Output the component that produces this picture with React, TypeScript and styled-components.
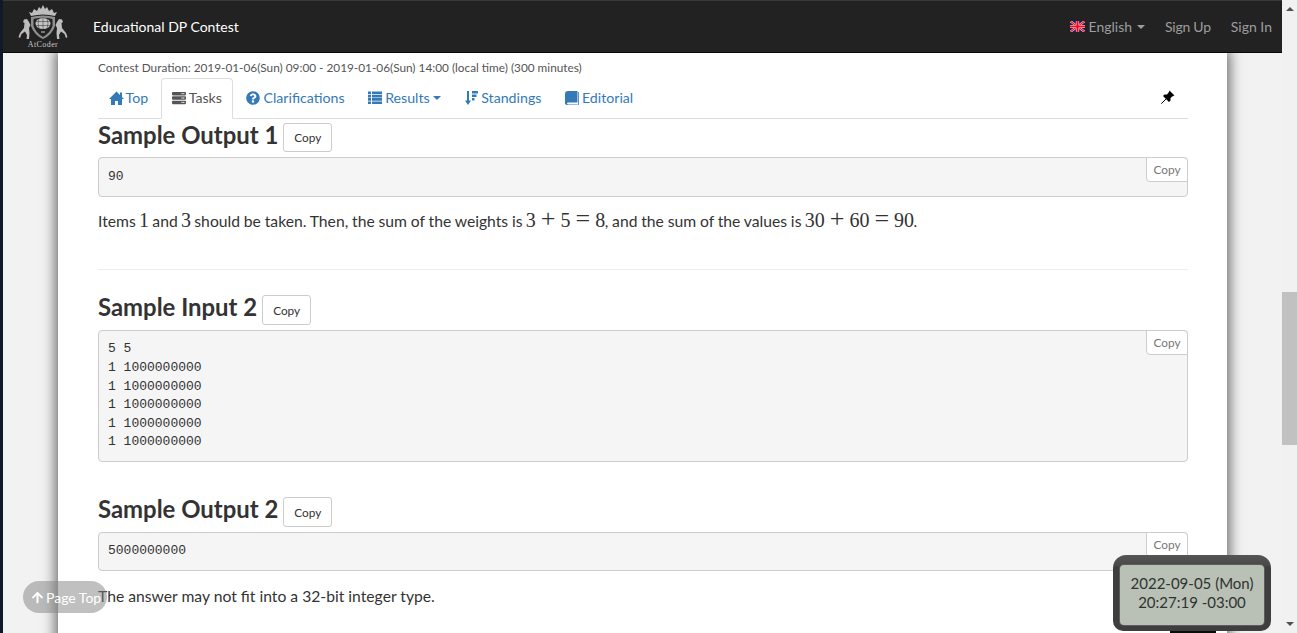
import React from "react";
import styled, { createGlobalStyle } from "styled-components";
import { FaServer, FaQuestionCircle, FaArrowUp } from "react-icons/fa";

const GlobalStyle = createGlobalStyle`
  html, body {
    margin: 0;
    height: 100%;
    overflow: hidden;
  }
  body {
    font-family: Lato, "Liberation Sans", sans-serif;
    font-size: 15.7px;
    color: #333;
  }
`;

const Page = styled.div`
  position: relative;
  display: flex;
  width: 1297px;
  height: 633px;
  overflow: hidden;
  background: #f2f2f2;
`;

const WindowEdge = styled.div`
  width: 3px;
  background: #0f1a26;
`;

const Main = styled.div`
  flex: 1;
  display: flex;
  flex-direction: column;
  min-width: 0;
`;

const Navbar = styled.header`
  height: 51px;
  flex: none;
  display: flex;
  align-items: center;
  background: #222;
  border-top: 1px solid #3a3a3a;
  border-bottom: 1px solid #080808;
  box-sizing: content-box;
  z-index: 2;
`;

const Brand = styled.div`
  width: 80px;
  margin-right: 10px;
  flex: none;
  display: flex;
  flex-direction: column;
  align-items: center;
`;

const BrandName = styled.span`
  font-family: "Liberation Serif", serif;
  font-size: 8px;
  line-height: 8px;
  letter-spacing: 0.4px;
  color: #c8c8c8;
`;

const ContestName = styled.a`
  font-size: 14px;
  color: #fff;
`;

const NavRight = styled.nav`
  margin-left: auto;
  display: flex;
  align-items: center;
  gap: 20px;
  padding-right: 10px;
  font-size: 14px;
  color: #9d9d9d;
`;

const NavItem = styled.a<{ $tight?: boolean }>`
  display: flex;
  align-items: center;
  color: #9d9d9d;
  letter-spacing: ${(p) => (p.$tight ? "-0.25px" : "0")};
`;

const Flag = styled.svg`
  width: 15px;
  height: 11px;
  margin-right: 4px;
`;

const Caret = styled.span<{ $color?: string; $gap?: number }>`
  display: inline-block;
  width: 0;
  height: 0;
  margin-left: ${(p) => p.$gap ?? 5}px;
  border-top: 4px solid ${(p) => p.$color ?? "#9d9d9d"};
  border-left: 4px solid transparent;
  border-right: 4px solid transparent;
`;

const Body = styled.div`
  flex: 1;
  min-height: 0;
  display: flex;
  padding-left: 55px;
  overflow: hidden;
`;

const Panel = styled.main`
  width: 1169px;
  height: 620px;
  flex: none;
  box-sizing: border-box;
  padding: 8px 39px 0 40px;
  background: #fff;
  box-shadow: 0 0 12px 3px rgba(0, 0, 0, 0.55);
`;

const Duration = styled.small`
  display: block;
  font-size: 11.8px;
  line-height: 14px;
  color: #555;
`;

const Tabs = styled.ul`
  display: flex;
  align-items: flex-start;
  list-style: none;
  margin: 3px 0 0;
  padding: 0;
  height: 41px;
  box-sizing: border-box;
  border-bottom: 1px solid #ddd;
`;

const Tab = styled.li<{ $active?: boolean }>`
  display: flex;
  align-items: center;
  gap: 3px;
  height: ${(p) => (p.$active ? 41 : 40)}px;
  box-sizing: border-box;
  padding: 0 10px 2px;
  margin-right: ${(p) => (p.$active ? 2.5 : 1.5)}px;
  font-size: 14.2px;
  color: ${(p) => (p.$active ? "#555" : "#337ab7")};
  background: ${(p) => (p.$active ? "#fff" : "transparent")};
  border: 1px solid ${(p) => (p.$active ? "#ddd" : "transparent")};
  border-bottom: ${(p) => (p.$active ? "1px solid #fff" : "none")};
  border-radius: 4px 4px 0 0;

  svg {
    font-size: 14px;
    flex: none;
  }
`;

const PinTab = styled.li`
  margin-left: auto;
  align-self: center;
  padding: 0 13px 2px 0;
  color: #000;
  line-height: 0;
`;

const HomeSvg = styled.svg`
  margin-right: -1.5px;
`;

const HeadingRow = styled.div<{ $top: number }>`
  display: flex;
  align-items: flex-start;
  gap: 5px;
  height: 29.5px;
  margin-top: ${(p) => p.$top}px;
`;

const Heading = styled.h3`
  margin: 0;
  font-size: 23.9px;
  font-weight: 700;
  line-height: 24px;
  color: #333;
`;

const CopyButton = styled.button`
  height: 29.5px;
  padding: 0 10px;
  font-family: inherit;
  font-size: 11.8px;
  color: #333;
  background: #fff;
  border: 1px solid #ccc;
  border-radius: 3px;
`;

const PreBox = styled.div`
  position: relative;
  margin-top: 5px;
  box-sizing: border-box;
  padding: 9.5px 9px;
  background: #f5f5f5;
  border: 1px solid #ccc;
  border-radius: 4px;
`;

const Pre = styled.pre`
  margin: 0;
  font-family: "Liberation Mono", monospace;
  font-size: 13px;
  line-height: 18.57px;
  color: #333;
`;

const CornerCopy = styled.span`
  position: absolute;
  top: -1px;
  right: -1px;
  width: 42px;
  height: 25px;
  box-sizing: border-box;
  display: flex;
  align-items: center;
  justify-content: center;
  font-size: 11.8px;
  color: #777;
  background: #fff;
  border: 1px solid #ccc;
  border-radius: 0 4px 0 4px;
`;

const Paragraph = styled.p<{ $tight?: boolean }>`
  margin: 13.4px 0 0;
  font-size: 15.7px;
  line-height: 23px;
  color: #333;
  word-spacing: ${(p) => (p.$tight ? "-0.2px" : "0")};
`;

const MathText = styled.span`
  font-family: "Liberation Serif", serif;
  font-size: 20px;
  line-height: 0;
  margin: 0 -0.5px;
`;

const MathOp = styled.span`
  font-size: 26px;
  font-weight: 400;
  line-height: 0;
  margin: 0 5px;
`;

const Rule = styled.hr`
  margin: 36px 0 0;
  border: 0;
  border-top: 1px solid #eee;
`;

const Scrollbar = styled.div`
  position: relative;
  width: 15px;
  flex: none;
  background: #f1f1f1;
  display: flex;
  flex-direction: column;
  align-items: center;
  justify-content: space-between;
  padding: 7px 0;
  box-sizing: border-box;
`;

const ScrollThumb = styled.div`
  position: absolute;
  top: 292px;
  left: 0;
  width: 15px;
  height: 153px;
  background: #c1c1c1;
`;

const ScrollArrow = styled.span<{ $up?: boolean }>`
  width: 0;
  height: 0;
  border-left: 4px solid transparent;
  border-right: 4px solid transparent;
  ${(p) => (p.$up ? "border-bottom: 4px solid #505050;" : "border-top: 4px solid #505050;")}
`;

const PageTop = styled.a`
  position: absolute;
  left: 23px;
  top: 581px;
  width: 84px;
  height: 32px;
  box-sizing: border-box;
  padding-left: 8px;
  display: flex;
  align-items: center;
  gap: 2px;
  font-size: 14px;
  white-space: nowrap;
  color: #fff;
  background: rgba(130, 130, 130, 0.5);
  border-radius: 16px;
  z-index: 3;

  svg {
    font-size: 13px;
  }
`;

const ClockStand = styled.div`
  position: absolute;
  left: 1170px;
  top: 628px;
  width: 46px;
  height: 5px;
  background: #0a0a0a;
  z-index: 3;
`;

const Clock = styled.div`
  position: absolute;
  left: 1113px;
  top: 555px;
  width: 158px;
  height: 76px;
  box-sizing: border-box;
  padding: 10px 7px 6px 7px;
  background: linear-gradient(#555 0, #4a4a4a 10px, #3e3e3e 12px, #3e3e3e 100%);
  border-radius: 13px 13px 10px 10px;
  z-index: 4;
`;

const ClockFace = styled.div`
  height: 100%;
  box-sizing: border-box;
  padding-top: 8.5px;
  text-align: center;
  font-size: 15px;
  line-height: 19.5px;
  color: #2f332f;
  background: #b9c0b6;
  border-radius: 4px;
  box-shadow: 0 0 0 1px #5c5c5c;
`;

function CrestLogo() {
  return (
    <svg width="52" height="37" viewBox="0 0 52 37">
      <g fill="#bdbdbd">
        {/* crown */}
        <path d="M14 12 L12 8 L15 9 L17 5 L20 7 L22 3 L24 5 L26 1 L28 5 L30 3 L32 7 L35 5 L37 9 L40 8 L38 12 Q26 9 14 12Z" />
        {/* shield */}
        <path d="M14 13 Q26 10 38 13 L38 22 Q35 31 26 35 Q17 31 14 22Z" fill="#8f8f8f" />
        <path d="M16.5 15 Q26 12.5 35.5 15 L35.5 22 Q33 29 26 33 Q19 29 16.5 22Z" fill="#222" />
        <ellipse cx="26" cy="19.5" rx="7.5" ry="5.5" fill="#c4c4c4" />
        <path d="M24 27 h4 v2 h-4z" fill="#777" />
        {/* rearing horses, one each side of the shield */}
        <path d="M12 18 L10 15 L7 15.5 L6 18 L7.5 19 L7 24 L3 29 L1.5 33 L3 34 L4.5 30 L8 27.5 L10 31 L9.5 35 L12 35 L12.5 29 L12 24 L13.5 21Z" />
        <path d="M40 18 L42 15 L45 15.5 L46 18 L44.5 19 L45 24 L49 29 L50.5 33 L49 34 L47.5 30 L44 27.5 L42 31 L42.5 35 L40 35 L39.5 29 L40 24 L38.5 21Z" />
      </g>
      <g stroke="#444" strokeWidth="0.6" fill="none">
        <path d="M18.5 17.5 H33.5 M18.5 21.5 H33.5 M26 14 V25 M22 14.5 Q20 19.5 22 24.5 M30 14.5 Q32 19.5 30 24.5" />
      </g>
    </svg>
  );
}

function UkFlag() {
  return (
    <Flag viewBox="0 0 15 11">
      <rect width="15" height="11" fill="#16206a" />
      <path d="M0 0 L15 11 M15 0 L0 11" stroke="#fff" strokeWidth="2.2" />
      <path d="M0 0 L15 11 M15 0 L0 11" stroke="#ee0a1c" strokeWidth="1.2" />
      <path d="M7.5 0 V11 M0 5.5 H15" stroke="#fff" strokeWidth="3.2" />
      <path d="M7.5 0 V11 M0 5.5 H15" stroke="#ee0a1c" strokeWidth="2.2" />
    </Flag>
  );
}

function HomeIcon() {
  return (
    <HomeSvg width="15" height="14" viewBox="0 0 15 14" fill="currentColor">
      <path d="M7.5 0.5 L11 4 V1.5 H13 V6 L15 8 H13 V14 H9 V10 H6 V14 H2 V8 H0Z" />
    </HomeSvg>
  );
}

function ListIcon() {
  return (
    <svg width="14" height="13" viewBox="0 0 14 13" fill="currentColor">
      <path d="M0 0.5h3v2.6H0zM4 0.5h10v2.6H4zM0 3.8h3v2.6H0zM4 3.8h10v2.6H4zM0 7.1h3v2.6H0zM4 7.1h10v2.6H4zM0 10.4h3V13H0zM4 10.4h10V13H4z" />
    </svg>
  );
}

function SortIcon() {
  return (
    <svg width="14" height="14" viewBox="-1 0 14 14" fill="currentColor">
      <path d="M2 0h2v9.5h2L3 14 0 9.5h2z" />
      <path d="M7 0h6v2.5H7zM7 3.5h4.5V6H7zM7 7h2.5v2.5H7z" />
    </svg>
  );
}

function BookIcon() {
  return (
    <svg width="14" height="14" viewBox="0 0 14 14" fill="currentColor">
      <path d="M3 0H12.5V11.5H3.5Q2 11.5 2 12.5T3.5 13.5H12.5V14H3Q0 14 0 12V3Q0 0 3 0Z" />
      <path d="M13.2 1h.8v13h-.8z" />
    </svg>
  );
}

function PinIcon() {
  return (
    <svg width="14" height="14" viewBox="0 0 14 14">
      <path fill="currentColor" d="M8.5 0.5 L13.5 5.5 L12 6 L9.5 8 L9.5 10.5 L8 12 L2 6 L3.5 4.5 L6 4.5 L8 2Z" />
      <path stroke="currentColor" strokeWidth="1" d="M5 9 L0.3 13.7" />
    </svg>
  );
}

const SAMPLE_TWO = `5 5
1 1000000000
1 1000000000
1 1000000000
1 1000000000
1 1000000000`;

function Sample({ title, top, text }: { title: string; top: number; text: string }) {
  return (
    <>
      <HeadingRow $top={top}>
        <Heading>{title}</Heading>
        <CopyButton>Copy</CopyButton>
      </HeadingRow>
      <PreBox>
        <Pre>{text}</Pre>
        <CornerCopy>Copy</CornerCopy>
      </PreBox>
    </>
  );
}

export default function App() {
  return (
    <Page>
      <GlobalStyle />
      <WindowEdge />
      <Main>
        <Navbar>
          <Brand>
            <CrestLogo />
            <BrandName>AtCoder</BrandName>
          </Brand>
          <ContestName>Educational DP Contest</ContestName>
          <NavRight>
            <NavItem>
              <UkFlag />
              English
              <Caret />
            </NavItem>
            <NavItem $tight>Sign Up</NavItem>
            <NavItem>Sign In</NavItem>
          </NavRight>
        </Navbar>
        <Body>
          <Panel>
            <Duration>
              Contest Duration: 2019-01-06(Sun) 09:00 - 2019-01-06(Sun) 14:00 (local time) (300 minutes)
            </Duration>
            <Tabs>
              <Tab>
                <HomeIcon />
                Top
              </Tab>
              <Tab $active>
                <FaServer />
                Tasks
              </Tab>
              <Tab>
                <FaQuestionCircle />
                Clarifications
              </Tab>
              <Tab>
                <ListIcon />
                Results
                <Caret $color="#337ab7" $gap={0} />
              </Tab>
              <Tab>
                <SortIcon />
                Standings
              </Tab>
              <Tab>
                <BookIcon />
                Editorial
              </Tab>
              <PinTab>
                <PinIcon />
              </PinTab>
            </Tabs>
            <Sample title="Sample Output 1" top={3.5} text="90" />
            <Paragraph $tight>
              Items <MathText>1</MathText> and <MathText>3</MathText> should be taken. Then, the sum of the weights is{" "}
              <MathText>
                3<MathOp>+</MathOp>5<MathOp>=</MathOp>8
              </MathText>
              , and the sum of the values is{" "}
              <MathText>
                30<MathOp>+</MathOp>60<MathOp>=</MathOp>90
              </MathText>
              .
            </Paragraph>
            <Rule />
            <Sample title="Sample Input 2" top={25.5} text={SAMPLE_TWO} />
            <Sample title="Sample Output 2" top={35} text="5000000000" />
            <Paragraph>The answer may not fit into a 32-bit integer type.</Paragraph>
          </Panel>
        </Body>
      </Main>
      <Scrollbar>
        <ScrollArrow $up />
        <ScrollThumb />
        <ScrollArrow />
      </Scrollbar>
      <PageTop>
        <FaArrowUp />
        Page Top
      </PageTop>
      <ClockStand />
      <Clock>
        <ClockFace>
          2022-09-05 (Mon)
          <br />
          20:27:19 -03:00
        </ClockFace>
      </Clock>
    </Page>
  );
}
